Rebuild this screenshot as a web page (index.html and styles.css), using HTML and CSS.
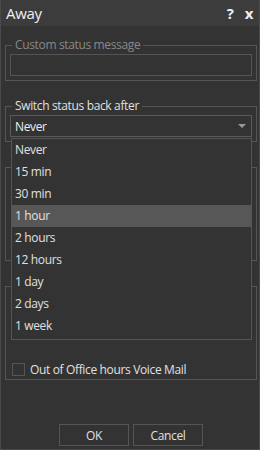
FILE: index.html
```html
<!DOCTYPE html>
<html lang="en">
<head>
  <meta charset="UTF-8" />
  <meta name="viewport" content="width=device-width, initial-scale=1" />
  <title>Away</title>
  <link rel="stylesheet" href="styles.css">
</head>
<body>
  <div class="window">
    <div class="titlebar">
      <span class="title">Away</span>
      <span class="title-buttons">
        <span class="help">?</span>
        <span class="close">x</span>
      </span>
    </div>

    <div class="content">
      <fieldset class="group disabled">
        <legend>Custom status message</legend>
        <div class="textbox"></div>
      </fieldset>

      <fieldset class="group">
        <legend>Switch status back after</legend>
        <div class="select">
          <span>Never</span>
          <span class="arrow"></span>
        </div>
      </fieldset>

      <!-- these two are covered by the open list -->
      <fieldset class="group tall">
        <legend>&nbsp;</legend>
      </fieldset>

      <fieldset class="group tall">
        <legend>&nbsp;</legend>
        <label class="check">
          <span class="box"></span>
          Out of Office hours Voice Mail
        </label>
      </fieldset>

      <div class="buttons">
        <button class="btn">OK</button>
        <button class="btn">Cancel</button>
      </div>
    </div>

    <!-- open drop-down of the select above -->
    <ul class="dropdown">
      <li>Never</li>
      <li>15 min</li>
      <li>30 min</li>
      <li class="active">1 hour</li>
      <li>2 hours</li>
      <li>12 hours</li>
      <li>1 day</li>
      <li>2 days</li>
      <li>1 week</li>
    </ul>
  </div>
</body>
</html>
```

FILE: styles.css
```css
* {
  box-sizing: border-box;
}
html, body {
  margin: 0;
  padding: 0;
}
body {
  font-family: 'Segoe UI', 'Open Sans', sans-serif;
  font-size: 12px;
  letter-spacing: -0.35px;
  background: #333;
  color: #e0e0e0;
}
.window {
  position: relative;
  width: 260px;
  height: 450px;
  background: #333;
  border: 1px solid #4a4a4a;
  border-top: none;
  display: flex;
  flex-direction: column;
}
.titlebar {
  height: 26px;
  background: #3c3c3c;
  display: flex;
  align-items: center;
  justify-content: space-between;
  padding: 0 6px 0 5px;
}
.title {
  font-size: 15px;
  letter-spacing: -0.3px;
  color: #f0f0f0;
}
.title-buttons {
  display: flex;
  gap: 11px;
  font-weight: bold;
  font-size: 15px;
  color: #f0f0f0;
}
.content {
  flex: 1;
  display: flex;
  flex-direction: column;
  padding: 11px 2px 0 4px;
}
.group {
  margin: 0 0 17px 0;
  padding: 1px 4px 4px 4px;
  border: 1px solid #555;
  min-width: 0;
}
.group legend {
  margin-left: 2px;
  padding: 0 3px;
  line-height: 16px;
  color: #e0e0e0;
}
.group.disabled legend {
  color: #888;
}
.textbox {
  height: 22px;
  border: 1px solid #555;
}
.select {
  height: 22px;
  border: 1px solid #5a5a5a;
  display: flex;
  align-items: center;
  justify-content: space-between;
  padding: 0 5px 0 4px;
  color: #eee;
}
.arrow {
  width: 0;
  height: 0;
  border-left: 4px solid transparent;
  border-right: 4px solid transparent;
  border-top: 4px solid #999;
}
.tall {
  height: 102px;
}
.check {
  display: flex;
  align-items: center;
  gap: 5px;
  margin-top: 66px;
  color: #e0e0e0;
}
.box {
  width: 13px;
  height: 13px;
  border: 1px solid #555;
  margin-left: 2px;
}
.buttons {
  margin-top: auto;
  margin-bottom: 3px;
  display: flex;
  justify-content: center;
  gap: 4px;
}
.btn {
  width: 70px;
  height: 22px;
  background: #333;
  border: 1px solid #555;
  color: #e0e0e0;
  font-family: inherit;
  font-size: 12px;
  letter-spacing: inherit;
  padding: 0;
}
.dropdown {
  position: absolute;
  left: 10px;
  top: 138px;
  width: 241px;
  height: 202px;
  margin: 0;
  padding: 0;
  list-style: none;
  background: #333;
  border: 1px solid #555;
}
.dropdown li {
  height: 22px;
  line-height: 22px;
  padding-left: 3px;
  color: #e0e0e0;
}
.dropdown li.active {
  background: #575757;
}
```
